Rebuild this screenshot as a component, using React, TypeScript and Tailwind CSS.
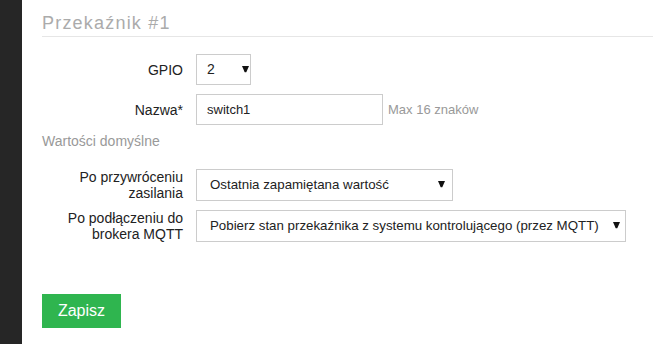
import type { ReactNode } from "react";

function Arrow() {
  return (
    <svg
      className="pointer-events-none absolute top-1/2 -translate-y-[65%]"
      width="7"
      height="7"
      viewBox="0 0 7 7"
    >
      <path d="M0 0.5 L7 0.5 L4.2 7 L2.8 7 Z" fill="#111" />
    </svg>
  );
}

function Row({ label, children }: { label: ReactNode; children: ReactNode }) {
  return (
    <div className="flex items-center">
      <div className="w-[141px] text-right text-[14px] leading-[16px] text-[#222]">{label}</div>
      <div className="ml-[13px] flex items-center">{children}</div>
    </div>
  );
}

export default function App() {
  return (
    <div className="flex h-[344px] w-[653px] overflow-hidden bg-white font-['Liberation_Sans',Arial,sans-serif]">
      <div className="w-[22px] shrink-0 bg-[#262626]" />
      <div className="flex-1 pl-[20px]">
        <h2 className="mt-[10px] border-b border-[#e6e6e6] text-[18px] leading-[26px] tracking-[1.2px] text-[#ababab]">
          Przekaźnik #1
        </h2>

        <div className="mt-[17px] flex flex-col gap-[9px]">
          <Row label="GPIO">
            <div className="relative flex h-[31px] w-[55px] items-center border border-[#ccc] pl-[10px] text-[14px] text-[#222]">
              2
              <span className="absolute right-[8px] top-0 h-full">
                <Arrow />
              </span>
            </div>
          </Row>
          <Row label="Nazwa*">
            <div className="flex h-[31px] w-[187px] items-center border border-[#ccc] pl-[10px] text-[13px] text-[#222]">
              switch1
            </div>
            <span className="ml-[5px] text-[13px] text-[#999]">Max 16 znaków</span>
          </Row>
        </div>

        <div className="mt-[6px] text-[14px] leading-[20px] text-[#999]">Wartości domyślne</div>

        <div className="mt-[18px] flex flex-col gap-[9px]">
          <Row
            label={
              <>
                Po przywróceniu
                <br />
                zasilania
              </>
            }
          >
            <div className="relative flex h-[32px] w-[257px] items-center border border-[#ccc] pl-[13px] text-[13.3px] text-[#222]">
              Ostatnia zapamiętana wartość
              <span className="absolute right-[14px] top-0 h-full">
                <Arrow />
              </span>
            </div>
          </Row>
          <Row
            label={
              <>
                Po podłączeniu do
                <br />
                brokera MQTT
              </>
            }
          >
            <div className="relative flex h-[32px] w-[430px] items-center border border-[#ccc] pl-[13px] text-[13.3px] text-[#222]">
              Pobierz stan przekaźnika z systemu kontrolującego (przez MQTT)
              <span className="absolute right-[12px] top-0 h-full">
                <Arrow />
              </span>
            </div>
          </Row>
        </div>

        <button className="mt-[52px] h-[34px] w-[79px] bg-[#2fb54f] text-[16px] text-white">Zapisz</button>
      </div>
    </div>
  );
}
